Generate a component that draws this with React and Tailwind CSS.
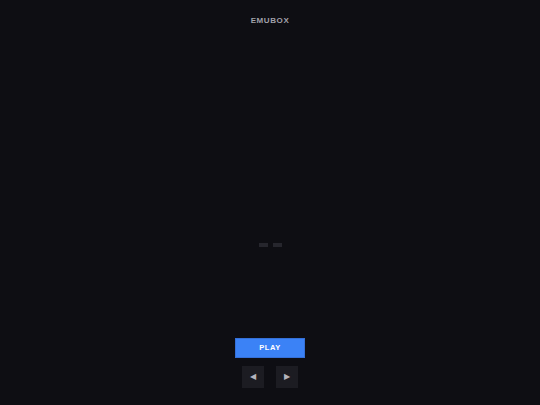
import React from 'react';

const App = () => {
  return (
    <div
      className="h-[405px] w-full flex flex-col items-center bg-[#0e0e13]"
      style={{ fontFamily: '"Liberation Sans", Arial, sans-serif' }}
    >
      <header className="pt-[16px] h-[40px]">
        <h1 className="text-[8px] font-bold tracking-[0.6px] text-[#a1a1aa] leading-[10px]">EMUBOX</h1>
      </header>

      {/* screen placeholder */}
      <div className="flex-1 w-full flex items-center justify-center pt-[111px]">
        <div className="flex gap-[5px]">
          <div className="w-[9px] h-[4px] bg-[#26262d]" />
          <div className="w-[9px] h-[4px] bg-[#26262d]" />
        </div>
      </div>

      <div className="flex flex-col items-center gap-[8px] pb-[17px]">
        <button className="w-[70px] h-[20px] bg-[#3b82f6] border border-[#3570d8] text-white text-[7.5px] font-bold tracking-[0.5px] flex items-center justify-center">
          PLAY
        </button>
        <div className="flex gap-[12px]">
          <button className="w-[22px] h-[22px] bg-[#1c1c22] text-[#b4b4bc] text-[8px] flex items-center justify-center">
            ◀
          </button>
          <button className="w-[22px] h-[22px] bg-[#1c1c22] text-[#b4b4bc] text-[8px] flex items-center justify-center">
            ▶
          </button>
        </div>
      </div>
    </div>
  );
};

export default App;
